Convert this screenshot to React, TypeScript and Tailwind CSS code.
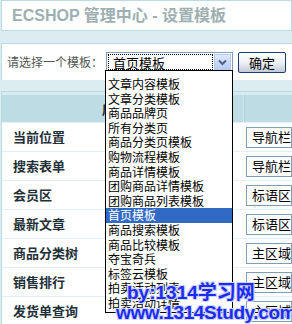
import React from 'react';

const templates = [
  '文章内容模板', '文章分类模板', '商品品牌页', '所有分类页', '商品分类页模板', '购物流程模板',
  '商品详情模板', '团购商品详情模板', '团购商品列表模板', '首页模板', '商品搜索模板', '商品比较模板',
  '夺宝奇兵', '标签云模板', '拍卖活动列表', '拍卖活动详情',
];

const rows = [
  { label: '当前位置', value: '导航栏下方' },
  { label: '搜索表单', value: '导航栏下方' },
  { label: '会员区', value: '标语区左边' },
  { label: '最新文章', value: '标语区右边' },
  { label: '商品分类树', value: '主区域左边' },
  { label: '销售排行', value: '主区域左边' },
  { label: '发货单查询', value: '主区域左边' },
];

const cjk = { fontFamily: '"Noto Sans CJK SC", "Liberation Sans", sans-serif' };

export default function App() {
  return (
    <div className="relative w-[292px] h-[324px] overflow-hidden bg-[#dcedf1]" style={cjk}>
      {/* Title */}
      <div className="h-[31px] ml-[1px] border border-[#b9dbe4] bg-white flex items-center pl-[10px]">
        <h1 className="text-[16px] font-bold text-[#9eafb2] leading-none" style={{ fontFamily: '"Liberation Sans", "Noto Sans CJK SC", sans-serif' }}>
          ECSHOP 管理中心 - 设置模板
        </h1>
      </div>

      {/* Template picker */}
      <div className="mt-[12px] h-[37px] ml-[1px] border-t border-l border-[#b9dbe4] bg-white flex items-center pl-[5px]">
        <span className="text-[12px] text-[#555] w-[99px]">请选择一个模板：</span>
        <div className="w-[127px] h-[20px] border border-[#7f9db9] bg-white flex items-stretch p-[1px]">
          <div className="flex-1 border border-dotted border-black flex items-center pl-[4px] text-[13px] text-black leading-none">首页模板</div>
          <div className="w-[17px] ml-[1px] bg-gradient-to-b from-[#dfe8fd] to-[#b9cbf5] border border-[#b7c8f0] flex items-center justify-center">
            <svg width="9" height="7" viewBox="0 0 9 7"><path d="M1 1.5 L4.5 5 L8 1.5" fill="none" stroke="#4d6185" strokeWidth="2" /></svg>
          </div>
        </div>
        <button className="ml-[5px] w-[48px] h-[21px] border border-[#1d3c72] rounded-[2px] bg-gradient-to-b from-white via-[#eef0f4] to-[#c3cbd9] text-[13px] text-black leading-none">
          确定
        </button>
      </div>

      {/* Table panel */}
      <div className="mt-[11px] ml-[1px] border-t border-l border-[#b9dbe4] bg-white">
        <div className="h-[3px] bg-[#d8ebf0]" />
        <div className="h-[27px] bg-[#bddce4] flex">
          <div className="w-[242px] border-r border-[#d6e9ee] flex items-center pl-[100px] text-[13px] font-bold text-[#1f3038]">库项目</div>
          <div className="flex-1 border-l border-[#a9ced8]" />
        </div>
        {rows.map((r) => (
          <div key={r.label} className="h-[29px] flex items-center border-t border-[#e3eff3]">
            <div className="w-[244px] pl-[11px] text-[13px] font-bold text-[#1f3038]">{r.label}</div>
            <div className="h-[21px] flex-1 border border-[#7f9db9] flex items-center pl-[5px] text-[13px] text-black whitespace-nowrap overflow-hidden">{r.value}</div>
          </div>
        ))}
      </div>

      {/* Open dropdown list */}
      <ul className="absolute left-[105px] top-[70px] w-[128px] h-[243px] border border-black bg-white pt-[6px] overflow-hidden">
        {templates.map((t) => (
          <li
            key={t}
            className={`h-[14.6px] pl-[2px] text-[12px] leading-[14.6px] whitespace-nowrap ${t === '首页模板' ? 'bg-[#316ac5] text-white' : 'text-black'}`}
          >
            {t}
          </li>
        ))}
      </ul>

      {/* Watermark */}
      <div
        className="absolute left-[116px] top-[283px] text-[#1f2cf0] font-bold leading-none whitespace-nowrap"
        style={{ fontFamily: '"Liberation Sans", "Noto Sans CJK SC", sans-serif', textShadow: '1px 1px 0 #c9d4ff, -1px -1px 0 #c9d4ff, 1px -1px 0 #c9d4ff, -1px 1px 0 #c9d4ff' }}
      >
        <div className="pl-[11px] text-[19px]">by:1314学习网</div>
        <div className="mt-[1px] text-[19px] tracking-[-0.4px]">www.1314Study.com</div>
      </div>
    </div>
  );
}
